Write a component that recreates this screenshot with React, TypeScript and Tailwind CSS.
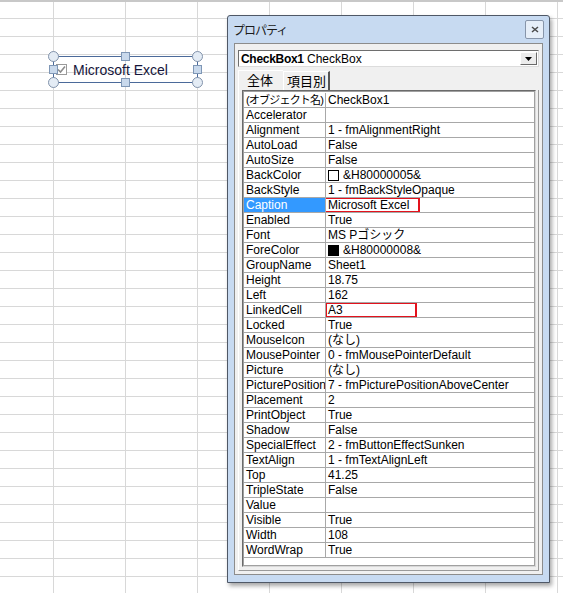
import React from 'react';

// プロパティ一覧（名前, 値, 付加情報）
type Row = {
  name: string;
  value: string;
  swatch?: 'white' | 'black';
  selected?: boolean;
  marked?: number;
  jp?: boolean;
};

const rows: Row[] = [
  { name: '(オブジェクト名)', value: 'CheckBox1', jp: true },
  { name: 'Accelerator', value: '' },
  { name: 'Alignment', value: '1 - fmAlignmentRight' },
  { name: 'AutoLoad', value: 'False' },
  { name: 'AutoSize', value: 'False' },
  { name: 'BackColor', value: '&H80000005&', swatch: 'white' },
  { name: 'BackStyle', value: '1 - fmBackStyleOpaque' },
  { name: 'Caption', value: 'Microsoft Excel', selected: true, marked: 96 },
  { name: 'Enabled', value: 'True' },
  { name: 'Font', value: 'MS Pゴシック' },
  { name: 'ForeColor', value: '&H80000008&', swatch: 'black' },
  { name: 'GroupName', value: 'Sheet1' },
  { name: 'Height', value: '18.75' },
  { name: 'Left', value: '162' },
  { name: 'LinkedCell', value: 'A3', marked: 92 },
  { name: 'Locked', value: 'True' },
  { name: 'MouseIcon', value: '(なし)' },
  { name: 'MousePointer', value: '0 - fmMousePointerDefault' },
  { name: 'Picture', value: '(なし)' },
  { name: 'PicturePosition', value: '7 - fmPicturePositionAboveCenter' },
  { name: 'Placement', value: '2' },
  { name: 'PrintObject', value: 'True' },
  { name: 'Shadow', value: 'False' },
  { name: 'SpecialEffect', value: '2 - fmButtonEffectSunken' },
  { name: 'TextAlign', value: '1 - fmTextAlignLeft' },
  { name: 'Top', value: '41.25' },
  { name: 'TripleState', value: 'False' },
  { name: 'Value', value: '' },
  { name: 'Visible', value: 'True' },
  { name: 'Width', value: '108' },
  { name: 'WordWrap', value: 'True' },
];

function Handle({ round, className }: { round?: boolean; className: string }) {
  return (
    <span
      className={
        round
          ? `absolute w-[11px] h-[11px] rounded-full bg-[#e4ecf5] border border-[#8293ab] ${className}`
          : `absolute w-[9px] h-[9px] bg-[#c9d9ec] border border-[#7f97b6] ${className}`
      }
    />
  );
}

function CheckBoxControl() {
  return (
    <div className="absolute left-[53px] top-[54px] w-[145px] h-[27px] border border-[#4b6a9a]">
      <div className="flex items-center h-full pl-[2px] gap-[6px]">
        <span className="w-[11px] h-[11px] border border-[#9a9a9a] bg-white flex items-center justify-center">
          <svg width="9" height="9" viewBox="0 0 9 9">
            <path d="M1 4.5 L3.5 7 L8 1.5" fill="none" stroke="#8c8c8c" strokeWidth="1.6" />
          </svg>
        </span>
        <span className="text-[14px] leading-none text-[#15153a]">Microsoft Excel</span>
      </div>
      <Handle round className="-left-[6px] -top-[6px]" />
      <Handle round className="-right-[6px] -top-[6px]" />
      <Handle round className="-left-[6px] -bottom-[6px]" />
      <Handle round className="-right-[6px] -bottom-[6px]" />
      <Handle className="left-[67px] -top-[5px]" />
      <Handle className="left-[67px] -bottom-[5px]" />
      <Handle className="-left-[5px] top-[8px]" />
      <Handle className="-right-[5px] top-[8px]" />
    </div>
  );
}

function PropertyRow({ row }: { row: Row }) {
  return (
    <div className="flex h-[15px] border-b border-[#a8a8a8]">
      <div
        className={`w-[81px] shrink-0 pl-[2px] leading-[14px] whitespace-nowrap overflow-hidden ${
          row.selected ? 'bg-[#3399ff] text-white' : ''
        } ${row.jp ? 'text-[11px] tracking-[-0.8px]' : ''}`}
      >
        {row.name}
      </div>
      <div className="relative flex items-center flex-1 border-l border-[#a8a8a8] pl-[2px] leading-[14px] whitespace-nowrap overflow-hidden">
        {row.swatch && (
          <span
            className={`w-[11px] h-[11px] mr-[4px] border border-black ${
              row.swatch === 'black' ? 'bg-black' : 'bg-white'
            }`}
          />
        )}
        {row.value}
        {row.marked === 96 && (
          <span className="absolute -left-[2px] -top-[1px] w-[96px] h-[16px] border-2 border-[#e3121c]" />
        )}
        {row.marked === 92 && (
          <span className="absolute -left-[1px] -top-[1px] w-[92px] h-[16px] border-2 border-[#e3121c]" />
        )}
      </div>
    </div>
  );
}

function PropertiesWindow() {
  return (
    <div className="absolute left-[227px] top-[13px] w-[323px] h-[568px] flex flex-col bg-[#c7daf1] border border-[#4f5866] rounded-t-[3px] shadow-[2px_3px_4px_rgba(0,0,0,0.35)]">
      {/* タイトルバー */}
      <div className="relative h-[27px] shrink-0 flex items-center pl-[5px]">
        <span className="text-[12px] tracking-[-1px] text-[#1b1b1b] [font-family:'Noto_Sans_CJK_JP',sans-serif]">
          プロパティ
        </span>
        <span className="absolute left-[297px] top-[4px] w-[19px] h-[19px] flex items-center justify-center rounded-[2px] border border-[#8795aa] bg-[#e6eef8]">
          <svg width="8" height="7" viewBox="0 0 8 7">
            <path d="M1 1 L7 6 M7 1 L1 6" stroke="#4a4a4a" strokeWidth="1.5" />
          </svg>
        </span>
      </div>

      {/* 本体 */}
      <div className="flex-1 mx-[6px] mb-[7px] flex flex-col bg-[#f0f0f0] border border-[#8c8c8c] px-[3px] pt-[6px]">
        {/* オブジェクト選択 */}
        <div className="h-[17px] flex items-center bg-white border border-t-[#6e6e6e] border-l-[#6e6e6e] border-r-[#dcdcdc] border-b-[#dcdcdc] pl-[2px]">
          <span className="flex-1 text-[12px] leading-none">
            <span className="font-bold tracking-[-0.3px]">CheckBox1</span> CheckBox
          </span>
          <span className="w-[17px] h-[13px] mr-[1px] flex items-center justify-center bg-[#ececec] border border-t-white border-l-white border-r-[#6a6a6a] border-b-[#6a6a6a]">
            <svg width="7" height="4" viewBox="0 0 7 4">
              <path d="M0 0 H7 L3.5 4 Z" fill="#000" />
            </svg>
          </span>
        </div>

        {/* タブ */}
        <div className="h-[20px] mt-[3px] flex items-start">
          <span className="w-[45px] h-[20px] pl-[8px] leading-[17px] text-[13px] border-t border-l border-white [font-family:'Noto_Sans_CJK_JP',sans-serif]">
            全体
          </span>
          <span className="w-[47px] h-[19px] mt-[1px] pl-[3px] leading-[17px] text-[13px] border-t border-l border-white border-r-2 border-r-[#555] [font-family:'Noto_Sans_CJK_JP',sans-serif]">
            項目別
          </span>
        </div>

        {/* プロパティ一覧 */}
        <div className="flex-1 mb-[3px] border-l border-white border-r border-r-[#9a9a9a] border-b border-b-[#9a9a9a] pl-[3px] pr-[2px] pb-[3px]">
          <div className="h-full border border-[#6a6a6a] border-r-[#d8d8d8] border-b-[#d8d8d8]">
            <div className="h-full flex flex-col bg-white border border-[#a0a0a0] pt-[1px] text-[12px]">
              {rows.map((row) => (
                <PropertyRow key={row.name} row={row} />
              ))}
            </div>
          </div>
        </div>
      </div>
    </div>
  );
}

export default function App() {
  return (
    <div className="relative w-[563px] h-[593px] overflow-hidden bg-white border-t-2 border-[#c8c8c8] text-black [font-family:'Liberation_Sans','Noto_Sans_CJK_JP',sans-serif]">
      <div className="absolute inset-0 bg-[linear-gradient(to_right,#d8d8d8_1px,transparent_1px),linear-gradient(to_bottom,#d8d8d8_1px,transparent_1px)] bg-[size:72px_18px] bg-[position:53px_-2px]" />
      <CheckBoxControl />
      <PropertiesWindow />
    </div>
  );
}
